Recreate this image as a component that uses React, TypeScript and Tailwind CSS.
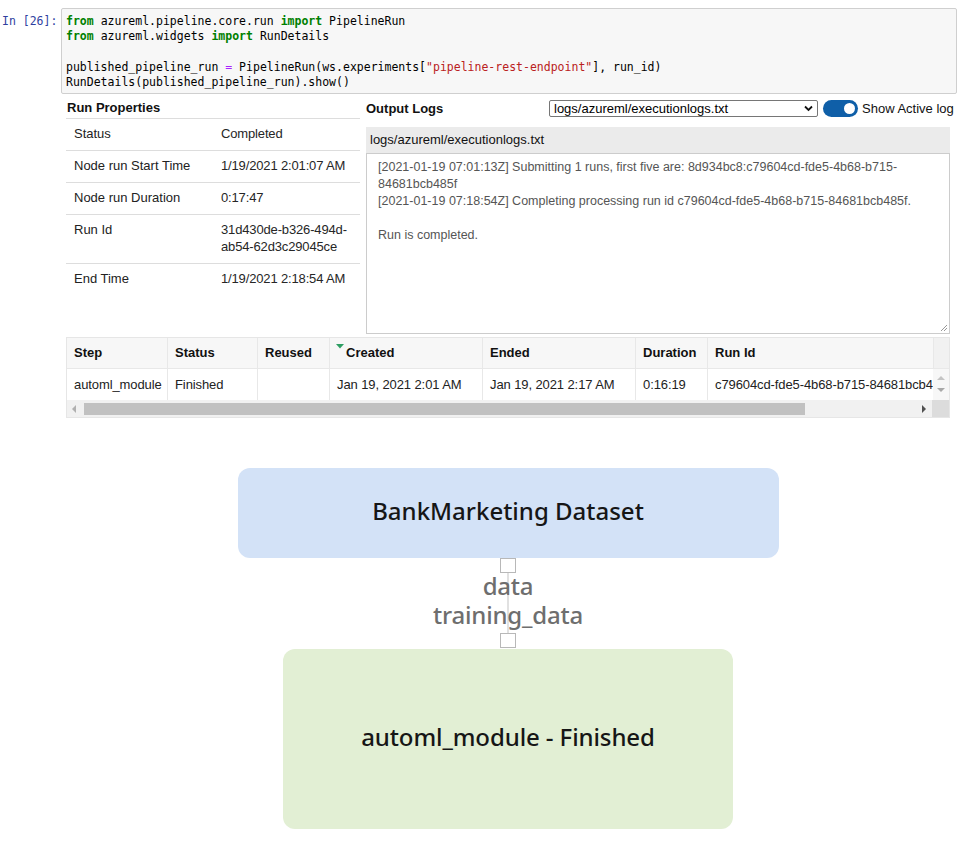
import React from "react";

const mono = { fontFamily: '"DejaVu Sans Mono", "Liberation Mono", monospace' };

function Kw({ children }: { children: React.ReactNode }) {
  return <span className="text-[#008000] font-bold">{children}</span>;
}

function CodeCell() {
  return (
    <div className="flex pt-2">
      <div
        className="w-[61px] pl-[2px] pt-[6px] text-[11.5px] leading-[15.25px] text-[#303F9F]"
        style={mono}
      >
        In [26]:
      </div>
      <div
        className="w-[896px] h-[86px] border border-[#cfcfcf] bg-[#f7f7f7] rounded-[2px] pl-[4px] pt-[5px] text-[11.5px] leading-[15.25px] text-black whitespace-pre"
        style={mono}
      >
        <div>
          <Kw>from</Kw> azureml.pipeline.core.run <Kw>import</Kw> PipelineRun
        </div>
        <div>
          <Kw>from</Kw> azureml.widgets <Kw>import</Kw> RunDetails
        </div>
        <div>&nbsp;</div>
        <div>
          published_pipeline_run <span className="text-[#AA22FF]">=</span> PipelineRun(ws.experiments[
          <span className="text-[#BA2121]">"pipeline-rest-endpoint"</span>], run_id)
        </div>
        <div>RunDetails(published_pipeline_run).show()</div>
      </div>
    </div>
  );
}

const props: [string, React.ReactNode][] = [
  ["Status", "Completed"],
  ["Node run Start Time", "1/19/2021 2:01:07 AM"],
  ["Node run Duration", "0:17:47"],
  [
    "Run Id",
    <>
      31d430de-b326-494d-
      <br />
      ab54-62d3c29045ce
    </>,
  ],
  ["End Time", "1/19/2021 2:18:54 AM"],
];

function RunProperties() {
  return (
    <div className="w-[294px] shrink-0">
      <div className="h-[19px] leading-[16px] border-b border-[#dddddd] pl-[1px] font-bold text-[13px] text-[#111]">
        Run Properties
      </div>
      {props.map(([k, v], i) => (
        <div
          key={k}
          className={`grid grid-cols-2 text-[13px] leading-[17px] text-[#222] pt-[6px] pb-[8px] ${
            i < props.length - 1 ? "border-b border-[#dddddd]" : ""
          }`}
        >
          <div className="pl-[8px]">{k}</div>
          <div className="pl-[8px] text-[#262626] tracking-[-0.15px]">{v}</div>
        </div>
      ))}
    </div>
  );
}

function OutputLogs() {
  return (
    <div className="w-[584px] shrink-0">
      <div className="flex items-center h-[17px] text-[13px]">
        <div className="w-[183px] shrink-0 font-bold text-[#111]">Output Logs</div>
        <div className="relative shrink-0 w-[269px] h-[17px] border border-[#767676] rounded-[2px] bg-white pl-[4px] leading-[15px] text-black">
          logs/azureml/executionlogs.txt
          <svg
            className="absolute right-[4px] top-[4px]"
            width="9"
            height="7"
            viewBox="0 0 9 7"
          >
            <path d="M1 1.5 L4.5 5 L8 1.5" fill="none" stroke="#111" strokeWidth="1.8" />
          </svg>
        </div>
        <div className="ml-[5px] shrink-0 w-[35px] h-[17px] rounded-full bg-[#0f5fa8] flex items-center justify-end pr-[3px]">
          <div className="w-[11px] h-[11px] rounded-full bg-white" />
        </div>
        <div className="ml-[4px] shrink-0 whitespace-nowrap text-[#111]">Show Active log</div>
      </div>
      <div className="mt-[10px] h-[26px] bg-[#ebebeb] pl-[4px] leading-[26px] text-[13px] text-[#111]">
        logs/azureml/executionlogs.txt
      </div>
      <div className="relative h-[181px] border border-[#cccccc] bg-white pl-[11px] pr-[12px] pt-[5px] text-[12.5px] leading-[17px] text-[#555]">
        <div>
          [2021-01-19 07:01:13Z] Submitting 1 runs, first five are: 8d934bc8:c79604cd-fde5-4b68-b715-
          <br />
          84681bcb485f
        </div>
        <div className="whitespace-nowrap">
          [2021-01-19 07:18:54Z] Completing processing run id c79604cd-fde5-4b68-b715-84681bcb485f.
        </div>
        <div>&nbsp;</div>
        <div>Run is completed.</div>
        <svg className="absolute right-[1px] bottom-[1px]" width="9" height="9" viewBox="0 0 9 9">
          <path d="M8 2 L2 8 M8 5 L5 8" stroke="#999" strokeWidth="1" />
        </svg>
      </div>
    </div>
  );
}

const cols = [
  { h: "Step", w: "w-[100px]", v: "automl_module" },
  { h: "Status", w: "w-[90px]", v: "Finished" },
  { h: "Reused", w: "w-[72px]", v: "" },
  { h: "Created", w: "w-[153px]", v: "Jan 19, 2021 2:01 AM", sort: true },
  { h: "Ended", w: "w-[153px]", v: "Jan 19, 2021 2:17 AM" },
  { h: "Duration", w: "w-[72px]", v: "0:16:19" },
  { h: "Run Id", w: "w-[226px]", v: "c79604cd-fde5-4b68-b715-84681bcb485f" },
];

function StepsTable() {
  return (
    <div className="mt-[3px] w-[884px] border border-[#e6e6e6] text-[13px]">
      <div className="flex h-[31px] bg-[#f7f7f7] border-b border-[#e8e8e8]">
        {cols.map((c, i) => (
          <div
            key={c.h}
            className={`${c.w} relative shrink-0 pl-[7px] leading-[30px] font-bold text-[#111] ${
              i > 0 ? "border-l border-[#e8e8e8]" : ""
            }`}
          >
            {c.sort && (
              <svg className="absolute left-[6px] top-[6px]" width="8" height="5" viewBox="0 0 8 5">
                <path d="M0 0 L8 0 L4 4.5 Z" fill="#2e9e63" />
              </svg>
            )}
            <span className={c.sort ? "pl-[9px]" : ""}>{c.h}</span>
          </div>
        ))}
        <div className="flex-1 bg-[#f1f1f1] border-l border-[#e8e8e8]" />
      </div>
      <div className="flex h-[31px] bg-white">
        {cols.map((c, i) => (
          <div
            key={c.h}
            className={`${c.w} shrink-0 pl-[7px] leading-[31px] text-[#222] whitespace-nowrap overflow-hidden tracking-[-0.1px] ${
              i > 0 ? "border-l border-[#e8e8e8]" : ""
            }`}
          >
            {c.v}
          </div>
        ))}
        <div className="flex-1 bg-[#f7f7f7] flex flex-col items-center pt-[6px] gap-[8px]">
          <svg width="8" height="5" viewBox="0 0 8 5">
            <path d="M0 5 L4 1 L8 5 Z" fill="#c4c4c4" />
          </svg>
          <svg width="8" height="5" viewBox="0 0 8 5">
            <path d="M0 0 L8 0 L4 4 Z" fill="#a8a8a8" />
          </svg>
        </div>
      </div>
      <div className="flex h-[17px]">
        <div className="flex-1 bg-[#f1f1f1] flex items-center">
          <svg className="ml-[5px]" width="5" height="8" viewBox="0 0 5 8">
            <path d="M4 0 L0 4 L4 8 Z" fill="#b0b0b0" />
          </svg>
          <div className="ml-[7px] w-[721px] h-[12px] bg-[#c1c1c1]" />
          <div className="flex-1" />
          <svg className="mr-[5px]" width="5" height="8" viewBox="0 0 5 8">
            <path d="M0 0 L4 4 L0 8 Z" fill="#505050" />
          </svg>
        </div>
        <div className="w-[17px] bg-[#dcdcdc]" />
      </div>
    </div>
  );
}

const diagFont = { fontFamily: '"Noto Sans", "Open Sans", sans-serif' };

function Diagram() {
  return (
    <div className="mt-[50px] flex flex-col items-center" style={diagFont}>
      <div className="w-[541px] h-[90px] rounded-[12px] bg-[#d3e2f7] flex items-center justify-center pb-[5px] text-[24px] font-medium text-[#161616]">
        BankMarketing Dataset
      </div>
      <div className="relative flex flex-col items-center">
        <div className="absolute left-1/2 top-[15px] bottom-[15px] w-px -translate-x-1/2 bg-[#c4c4c4]" />
        <div className="w-[16px] h-[15px] border-[1.5px] border-[#b8b8b8] bg-white" />
        <div className="relative flex flex-col items-center text-[24px] font-medium text-[#6e6e6e] text-center pb-[4px] tracking-[-0.2px]">
          <div className="h-[28px] leading-[26px]">data</div>
          <div className="h-[28px] leading-[28px]">training_data</div>
        </div>
        <div className="w-[16px] h-[15px] border-[1.5px] border-[#b8b8b8] bg-white" />
      </div>
      <div className="mt-[1px] w-[450px] h-[180px] rounded-[12px] bg-[#e2efd4] flex items-center justify-center pb-[4px] text-[24px] font-medium text-[#161616] tracking-[-0.1px]">
        automl_module - Finished
      </div>
    </div>
  );
}

export default function App() {
  return (
    <div
      className="w-[967px] h-[844px] bg-white overflow-hidden"
      style={{ fontFamily: '"Liberation Sans", Arial, sans-serif' }}
    >
      <CodeCell />
      <div className="ml-[66px] w-[884px]">
        <div className="flex gap-[6px] mt-[6px]">
          <RunProperties />
          <OutputLogs />
        </div>
        <StepsTable />
        <Diagram />
      </div>
    </div>
  );
}
